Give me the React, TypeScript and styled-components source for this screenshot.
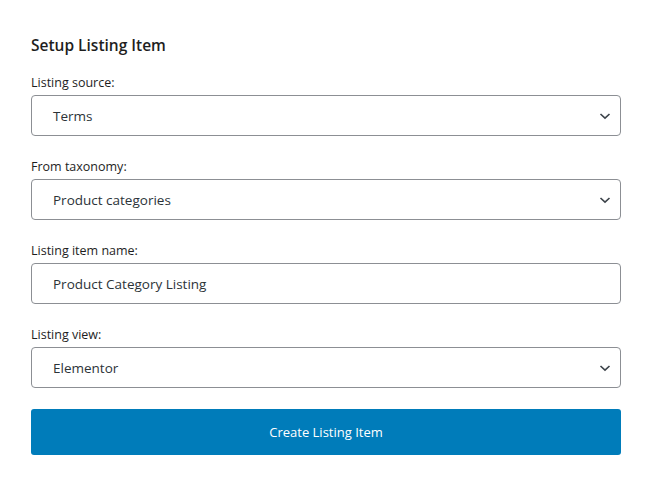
import { createGlobalStyle, styled } from "styled-components";

const GlobalStyle = createGlobalStyle`
  html, body {
    margin: 0;
    padding: 0;
    background: #fff;
    font-family: "Open Sans", "Noto Sans", sans-serif;
    color: #1e1e1e;
  }
`;

const Panel = styled.div`
  width: 590px;
  padding: 34px 31px 0;
  display: flex;
  flex-direction: column;
`;

const Title = styled.h2`
  margin: 0 0 18px;
  font-size: 15.5px;
  font-weight: 600;
  line-height: 22px;
  color: #1e1e1e;
`;

const Field = styled.div`
  display: flex;
  flex-direction: column;
  margin-bottom: 22px;
`;

const Label = styled.label`
  font-size: 12.5px;
  line-height: 18px;
  color: #1e1e1e;
  margin-bottom: 3px;
`;

const Box = styled.div`
  position: relative;
  box-sizing: border-box;
  height: 41px;
  border: 1px solid #8c8f94;
  border-radius: 4px;
  display: flex;
  align-items: center;
  padding: 0 21px;
  font-size: 13.5px;
  color: #2c3338;
`;

const Chevron = styled.svg`
  position: absolute;
  right: 9px;
  top: 50%;
  margin-top: -5px;
  width: 12px;
  height: 10px;
`;

const Button = styled.button`
  margin-top: -1px;
  height: 46px;
  border: none;
  border-radius: 3px;
  background: #007cba;
  color: #fff;
  font-family: inherit;
  font-size: 13px;
  font-weight: 500;
  cursor: pointer;
`;

const Select = ({ value }: { value: string }) => (
  <Box>
    {value}
    <Chevron viewBox="0 0 12 10">
      <path d="M1.5 3 L6 7.2 L10.5 3" fill="none" stroke="#3c434a" strokeWidth="1.6" />
    </Chevron>
  </Box>
);

export default function App() {
  return (
    <>
      <GlobalStyle />
      <Panel>
        <Title>Setup Listing Item</Title>
        <Field>
          <Label>Listing source:</Label>
          <Select value="Terms" />
        </Field>
        <Field>
          <Label>From taxonomy:</Label>
          <Select value="Product categories" />
        </Field>
        <Field>
          <Label>Listing item name:</Label>
          <Box>Product Category Listing</Box>
        </Field>
        <Field>
          <Label>Listing view:</Label>
          <Select value="Elementor" />
        </Field>
        <Button>Create Listing Item</Button>
      </Panel>
    </>
  );
}
